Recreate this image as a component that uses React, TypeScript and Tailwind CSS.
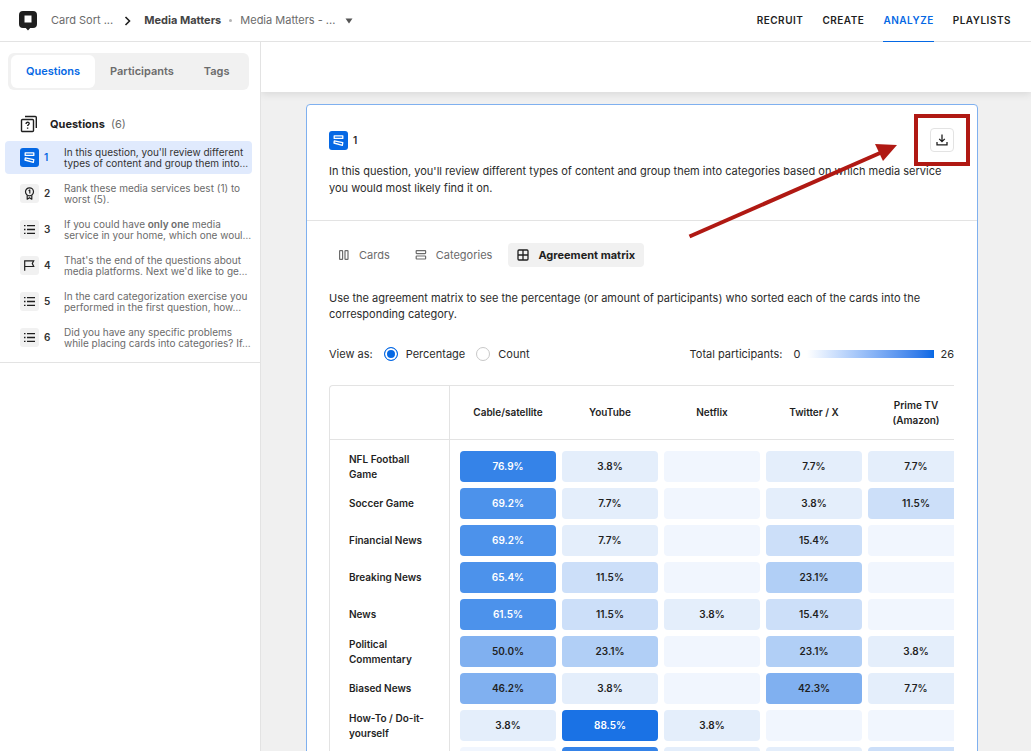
import React, { useState, ReactNode } from 'react';

interface Question {
  id: number;
  kind: 'sort' | 'rank' | 'list' | 'flag';
  text: ReactNode;
}

interface MatrixRow {
  label: string;
  values: (number | null)[];
}

const questions: Question[] = [
  { id: 1, kind: 'sort', text: <>In this question, you'll review different<br />types of content and group them into…</> },
  { id: 2, kind: 'rank', text: <>Rank these media services best (1) to<br />worst (5).</> },
  { id: 3, kind: 'list', text: <>If you could have <b className="font-semibold">only one</b> media<br />service in your home, which one woul…</> },
  { id: 4, kind: 'flag', text: <>That's the end of the questions about<br />media platforms. Next we'd like to ge…</> },
  { id: 5, kind: 'list', text: <>In the card categorization exercise you<br />performed in the first question, how…</> },
  { id: 6, kind: 'list', text: <>Did you have any specific problems<br />while placing cards into categories? If…</> },
];

const columns = ['Cable/satellite', 'YouTube', 'Netflix', 'Twitter / X', 'Prime TV (Amazon)'];

const rows: MatrixRow[] = [
  { label: 'NFL Football Game', values: [76.9, 3.8, null, 7.7, 7.7] },
  { label: 'Soccer Game', values: [69.2, 7.7, null, 3.8, 11.5] },
  { label: 'Financial News', values: [69.2, 7.7, null, 15.4, null] },
  { label: 'Breaking News', values: [65.4, 11.5, null, 23.1, null] },
  { label: 'News', values: [61.5, 11.5, 3.8, 15.4, null] },
  { label: 'Political Commentary', values: [50, 23.1, null, 23.1, 3.8] },
  { label: 'Biased News', values: [46.2, 3.8, null, 42.3, 7.7] },
  { label: 'How-To / Do-it-yourself', values: [3.8, 88.5, 3.8, null, null] },
  { label: '', values: [null, 76.9, 3.8, 3.8, 11.5] },
];

const TOTAL_PARTICIPANTS = 26;

const cellTone = (value: number | null) => {
  if (value === null) return 'bg-[#f1f6fe]';
  if (value < 10) return 'bg-[#e4eefb]';
  if (value < 20) return 'bg-[#ccdff9]';
  if (value < 30) return 'bg-[#b1cff6]';
  if (value <= 50) return 'bg-[#80b0f0]';
  if (value < 70) return 'bg-[#4c92eb] text-white';
  if (value < 80) return 'bg-[#3583e8] text-white';
  return 'bg-[#1a72e5] text-white';
};

const SortIcon = () => (
  <svg viewBox="0 0 19 19" className="h-[19px] w-[19px]" fill="none" stroke="currentColor" strokeWidth="1.3" strokeLinejoin="round">
    <path d="M5.2 4.8h8.600v2.600H5.200z" />
    <path d="M5.300 9.800l8.500 1.900-.5 2.600-8.300-2.300z" />
  </svg>
);

const RankIcon = () => (
  <svg viewBox="0 0 19 19" className="h-[19px] w-[19px]" fill="none" stroke="currentColor" strokeWidth="1.2" strokeLinejoin="round">
    <circle cx="9.5" cy="7.8" r="4" />
    <path d="M8.6 6.8l1.2-.8v3.6" />
    <path d="M7.2 11.2v4l2.3-1.5 2.3 1.5v-4" />
  </svg>
);

const ListIcon = () => (
  <svg viewBox="0 0 19 19" className="h-[19px] w-[19px]" stroke="currentColor" strokeWidth="1.3">
    <path d="M4 5.6h1.5M4 9.5h1.5M4 13.4h1.5M7 5.6h8M7 9.5h8M7 13.4h8" />
  </svg>
);

const FlagIcon = () => (
  <svg viewBox="0 0 19 19" className="h-[19px] w-[19px]" fill="none" stroke="currentColor" strokeWidth="1.2">
    <path d="M4.7 14.8V4.8h9l-1.4 2.8 1.4 2.9h-9" />
  </svg>
);

const kindIcons = { sort: SortIcon, rank: RankIcon, list: ListIcon, flag: FlagIcon };

const QuestionsIcon = () => (
  <svg viewBox="0 0 18 18" className="h-[18px] w-[18px]" fill="none" stroke="#1f1f1f" strokeWidth="1.4">
    <rect x="1.5" y="4.5" width="12" height="12" rx="1" />
    <path d="M5 1.5h10.3a1 1 0 0 1 1 1V13" />
    <path d="M6 8.9c0-2.2 3.2-2.2 3.2-.3 0 1.1-1.6 1.3-1.6 2.5M7.6 12.5v1.3" />
  </svg>
);

const CardsIcon = () => (
  <svg viewBox="0 0 12 12" className="h-3 w-3" fill="none" stroke="currentColor" strokeWidth="1.2">
    <rect x="1.6" y="1.6" width="3" height="8.8" rx=".5" />
    <rect x="7" y="1.6" width="3" height="8.8" rx=".5" />
  </svg>
);

const CategoriesIcon = () => (
  <svg viewBox="0 0 12 12" className="h-3 w-3" fill="none" stroke="currentColor" strokeWidth="1.2">
    <rect x="1.2" y="1.6" width="9.4" height="3" rx=".5" />
    <rect x="1.2" y="7" width="9.4" height="3" rx=".5" />
  </svg>
);

const MatrixIcon = () => (
  <svg viewBox="0 0 12 12" className="h-3 w-3" fill="none" stroke="currentColor" strokeWidth="1.3">
    <rect x="1" y="1" width="10" height="10" rx="1" />
    <path d="M6 1v10M1 6h10" />
  </svg>
);

const views = [
  { name: 'Cards', icon: CardsIcon },
  { name: 'Categories', icon: CategoriesIcon },
  { name: 'Agreement matrix', icon: MatrixIcon },
];

const TopBar = () => (
  <header className="flex h-[42px] shrink-0 items-stretch justify-between border-b border-[#e3e3e3] pl-[18px] pr-5">
    <div className="flex items-center text-[11px] text-[#6b6b6b]">
      <svg viewBox="0 0 20 22" className="h-[22px] w-5" aria-hidden="true">
        <path d="M5 1h10a4 4 0 0 1 4 4v9a4 4 0 0 1-4 4h-2.8L10 20.5 7.8 18H5a4 4 0 0 1-4-4V5a4 4 0 0 1 4-4z" fill="#1f1f1f" />
        <path d="M6.5 5.5h7v7h-7z" fill="#fff" />
      </svg>
      <a href="#project" className="ml-[13px]">Card Sort ...</a>
      <svg viewBox="0 0 8 10" className="ml-[11px] h-[10px] w-2" fill="none" stroke="#1f1f1f" strokeWidth="1.6">
        <path d="M1.500 1l4 4-4 4" />
      </svg>
      <a href="#media" className="ml-3 font-bold text-[#444]">Media Matters</a>
      <span className="mx-2 h-[3px] w-[3px] rounded-full bg-[#b5b5b5]" />
      <button type="button" className="flex items-center gap-[10px]">
        Media Matters - ...
        <svg viewBox="0 0 8 6" className="h-[6px] w-2 fill-[#555]"><path d="M.5.500h7L4 5.500z" /></svg>
      </button>
    </div>
    <nav className="flex gap-[19px] text-[10px] font-semibold tracking-wider text-[#1f1f1f]">
      <a href="#recruit" className="flex items-center">RECRUIT</a>
      <a href="#create" className="flex items-center">CREATE</a>
      <a href="#analyze" className="-mb-px flex items-center border-b border-[#0568e4] text-[#0568e4]">ANALYZE</a>
      <a href="#playlists" className="flex items-center">PLAYLISTS</a>
    </nav>
  </header>
);

const Sidebar = () => {
  const [tab, setTab] = useState('Questions');
  const [selected, setSelected] = useState(1);

  return (
    <aside className="w-[261px] shrink-0 border-r border-[#e3e3e3]">
      <div className="border-b border-[#e3e3e3] pb-2 pt-[11px]">
        <div className="ml-2 mr-[11px] flex h-[37px] rounded-md bg-[#f1f1f1] py-[2px] pl-[3px] text-[11px] font-semibold">
          {['Questions', 'Participants', 'Tags'].map((name) => (
            <button
              key={name}
              type="button"
              onClick={() => setTab(name)}
              className={`rounded-md px-[15px] ${tab === name ? 'bg-white text-[#0568e4]' : 'text-[#6b6b6b]'}`}
            >
              {name}
            </button>
          ))}
        </div>
        <h2 className="ml-5 mt-[25px] flex h-[18px] items-center text-[11px] font-bold text-[#1f1f1f]">
          <QuestionsIcon />
          <span className="ml-3">Questions</span>
          <span className="ml-[6px] font-normal text-[#6b6b6b]">(6)</span>
        </h2>
        <ul className="ml-[5px] mr-2 mt-2 flex flex-col gap-[3px]">
          {questions.map((q) => {
            const Icon = kindIcons[q.kind];
            const active = q.id === selected;
            return (
              <li key={q.id}>
                <button
                  type="button"
                  onClick={() => setSelected(q.id)}
                  className={`flex h-[33px] w-full items-center rounded-sm pl-[15px] text-left ${active ? 'bg-[#e0eafd]' : ''}`}
                >
                  <span className={`rounded-[3px] ${active ? 'bg-[#0568e4] text-white' : 'bg-[#f1f1f1] text-[#1f1f1f]'}`}>
                    <Icon />
                  </span>
                  <span className={`ml-[5px] w-5 text-[10px] font-semibold ${active ? 'text-[#0568e4]' : 'text-[#333]'}`}>{q.id}</span>
                  <span className={`whitespace-nowrap text-[10px] leading-[11px] ${active ? 'text-[#333]' : 'text-[#6b6b6b]'}`}>{q.text}</span>
                </button>
              </li>
            );
          })}
        </ul>
      </div>
    </aside>
  );
};

const AgreementMatrix = () => (
  <div className="mt-[23px] overflow-hidden rounded-tl-sm border-l border-t border-[#e3e3e3]">
    <table className="w-[637px] table-fixed border-separate border-spacing-0 text-[10px] font-semibold text-[#1f1f1f]">
      <colgroup>
        <col className="w-[120px]" />
        <col className="w-[109px]" />
        <col span={4} className="w-[102px]" />
      </colgroup>
      <thead>
        <tr className="h-[54px]">
          <td className="border-b border-r border-[#e3e3e3]" />
          {columns.map((name) => (
            <th key={name} scope="col" className="border-b border-[#e3e3e3] px-5 py-0 font-semibold leading-[15px] first-of-type:pl-[10px] first-of-type:pr-[3px]">
              {name}
            </th>
          ))}
        </tr>
      </thead>
      <tbody>
        <tr className="h-2">
          <td className="border-r border-[#e3e3e3]" />
          <td colSpan={5} />
        </tr>
        {rows.map((row, i) => (
          <tr key={i} className="h-[37px]">
            <th scope="row" className="border-r border-[#e3e3e3] py-0 pl-[19px] pr-3 text-left font-semibold leading-[15px]">{row.label}</th>
            {row.values.map((value, j) => (
              <td key={j} className="px-[3px] py-0 first-of-type:pl-[10px]">
                <div className={`flex h-[31px] items-center justify-center rounded-sm ${cellTone(value)}`}>
                  {value !== null && `${value.toFixed(1)}%`}
                </div>
              </td>
            ))}
          </tr>
        ))}
      </tbody>
    </table>
  </div>
);

const radioClass =
  'h-[14px] w-[14px] appearance-none rounded-full border border-[#c8c8c8] bg-white checked:border-[#0568e4] checked:bg-[#0568e4] checked:shadow-[inset_0_0_0_2px_white]';

const ResultCard = () => {
  const [view, setView] = useState('Agreement matrix');
  const [unit, setUnit] = useState('percentage');

  return (
    <section className="relative ml-[45px] mr-[53px] mt-3 rounded-sm border border-[#7fb0ef] bg-white text-[11px] text-[#2b2b2b]">
      <div className="border-b border-[#e3e3e3] pb-[23px] pl-[22px] pr-[23px] pt-[23px]">
        <div className="flex items-center justify-between">
          <div className="flex items-center gap-[5px] text-[10px] font-semibold">
            <span className="rounded-[3px] bg-[#0568e4] text-white"><SortIcon /></span>
            1
          </div>
          <div className="relative">
            <button type="button" aria-label="Download" className="flex h-6 w-6 items-center justify-center rounded-sm border border-[#e3e3e3]">
              <svg viewBox="0 0 12 12" className="h-3 w-3" fill="none" stroke="#1f1f1f" strokeWidth="1.3">
                <path d="M6 .5v7M3.200 4.900L6 7.700l2.800-2.800M1 8v2.900h10V8" />
              </svg>
            </button>
            <span className="pointer-events-none absolute -inset-x-4 -inset-y-[14px] border-4 border-[#b01913]" />
          </div>
        </div>
        <p className="mt-[11px] leading-[17px]">
          In this question, you'll review different types of content and group them into categories based on which media service you would most likely find it on.
        </p>
      </div>

      <div className="pl-[22px] pr-[23px] pt-[22px]">
        <div className="flex gap-[7px]">
          {views.map(({ name, icon: Icon }) => (
            <button
              key={name}
              type="button"
              onClick={() => setView(name)}
              className={`flex h-6 items-center gap-[9px] rounded-sm px-[9px] ${view === name ? 'bg-[#f1f1f1] font-bold text-[#1f1f1f]' : 'text-[#6b6b6b]'}`}
            >
              <Icon />
              {name}
            </button>
          ))}
        </div>
        <p className="mt-[23px] leading-4">
          Use the agreement matrix to see the percentage (or amount of participants) who sorted each of the cards into the corresponding category.
        </p>
        <div className="mt-6 flex h-4 items-center justify-between">
          <div className="flex items-center">
            <span>View as:</span>
            <label className="ml-[11px] flex items-center gap-2">
              <input type="radio" name="unit" checked={unit === 'percentage'} onChange={() => setUnit('percentage')} className={radioClass} />
              Percentage
            </label>
            <label className="ml-[11px] flex items-center gap-2">
              <input type="radio" name="unit" checked={unit === 'count'} onChange={() => setUnit('count')} className={radioClass} />
              Count
            </label>
          </div>
          <div className="flex items-center">
            <span>Total participants:</span>
            <span className="ml-[11px]">0</span>
            <span className="ml-[7px] mr-[6px] h-2 w-[127px] bg-linear-to-r from-white to-[#0568e4]" />
            <span>{TOTAL_PARTICIPANTS}</span>
          </div>
        </div>
        <AgreementMatrix />
      </div>

      {/* Callout arrow pointing at the download button */}
      <svg viewBox="0 0 210 96" className="pointer-events-none absolute right-[79px] top-[38px] h-24 w-[210px]" aria-hidden="true">
        <path d="M1.500 93.500L192 10" stroke="#b01913" strokeWidth="4" />
        <path d="M187 1l22 1-14 16z" fill="#b01913" />
      </svg>
    </section>
  );
};

export default function App() {
  return (
    <div className="flex h-screen flex-col overflow-hidden bg-white font-[Inter,sans-serif]">
      <TopBar />
      <div className="flex min-h-0 flex-1">
        <Sidebar />
        <main className="flex min-w-0 flex-1 flex-col overflow-hidden bg-[#f0f0f0]">
          <div className="z-10 h-[50px] shrink-0 bg-white shadow-[0_2px_8px_rgba(0,0,0,0.1)]" />
          <div className="min-h-0 flex-1 overflow-y-auto [scrollbar-width:none]">
            <ResultCard />
          </div>
        </main>
      </div>
    </div>
  );
}
